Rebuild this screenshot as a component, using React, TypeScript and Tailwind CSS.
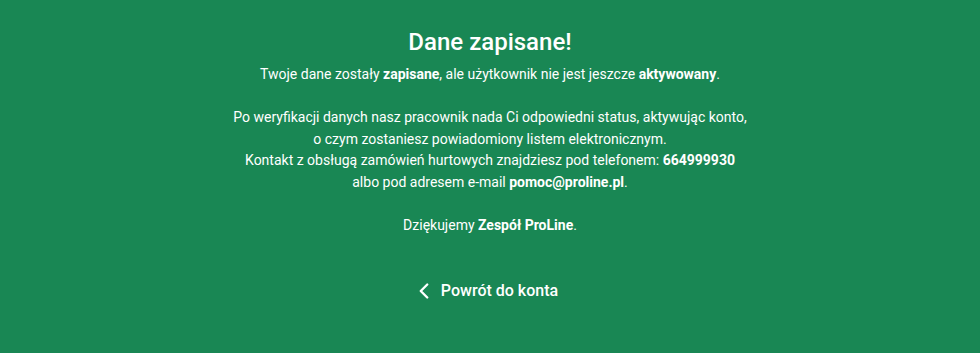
import { ChevronLeft } from 'lucide-react'

export default function App() {
  return (
    <div
      className="w-full min-h-[353px] bg-[#198754] text-white flex flex-col items-center pt-[26px]"
      style={{ fontFamily: 'Roboto, "Liberation Sans", sans-serif' }}
    >
      <h1 className="text-[24px] leading-8 font-medium">Dane zapisane!</h1>
      <div className="mt-[6px] text-center text-[14px] leading-[21.5px]">
        <p>
          Twoje dane zostały <strong className="font-bold">zapisane</strong>, ale użytkownik nie jest jeszcze{' '}
          <strong className="font-bold">aktywowany</strong>.
        </p>
        <br />
        <p>
          Po weryfikacji danych nasz pracownik nada Ci odpowiedni status, aktywując konto,
          <br />
          o czym zostaniesz powiadomiony listem elektronicznym.
          <br />
          Kontakt z obsługą zamówień hurtowych znajdziesz pod telefonem: <strong className="font-bold">664999930</strong>
          <br />
          albo pod adresem e-mail <strong className="font-bold">pomoc@proline.pl</strong>.
        </p>
        <br />
        <p>
          Dziękujemy <strong className="font-bold">Zespół ProLine</strong>.
        </p>
      </div>
      <button className="mt-[42px] pr-[11px] flex items-center gap-[4px] text-[16px] font-medium leading-6 text-white">
        <ChevronLeft className="w-[26px] h-[26px]" strokeWidth={2.2} />
        Powrót do konta
      </button>
    </div>
  )
}
